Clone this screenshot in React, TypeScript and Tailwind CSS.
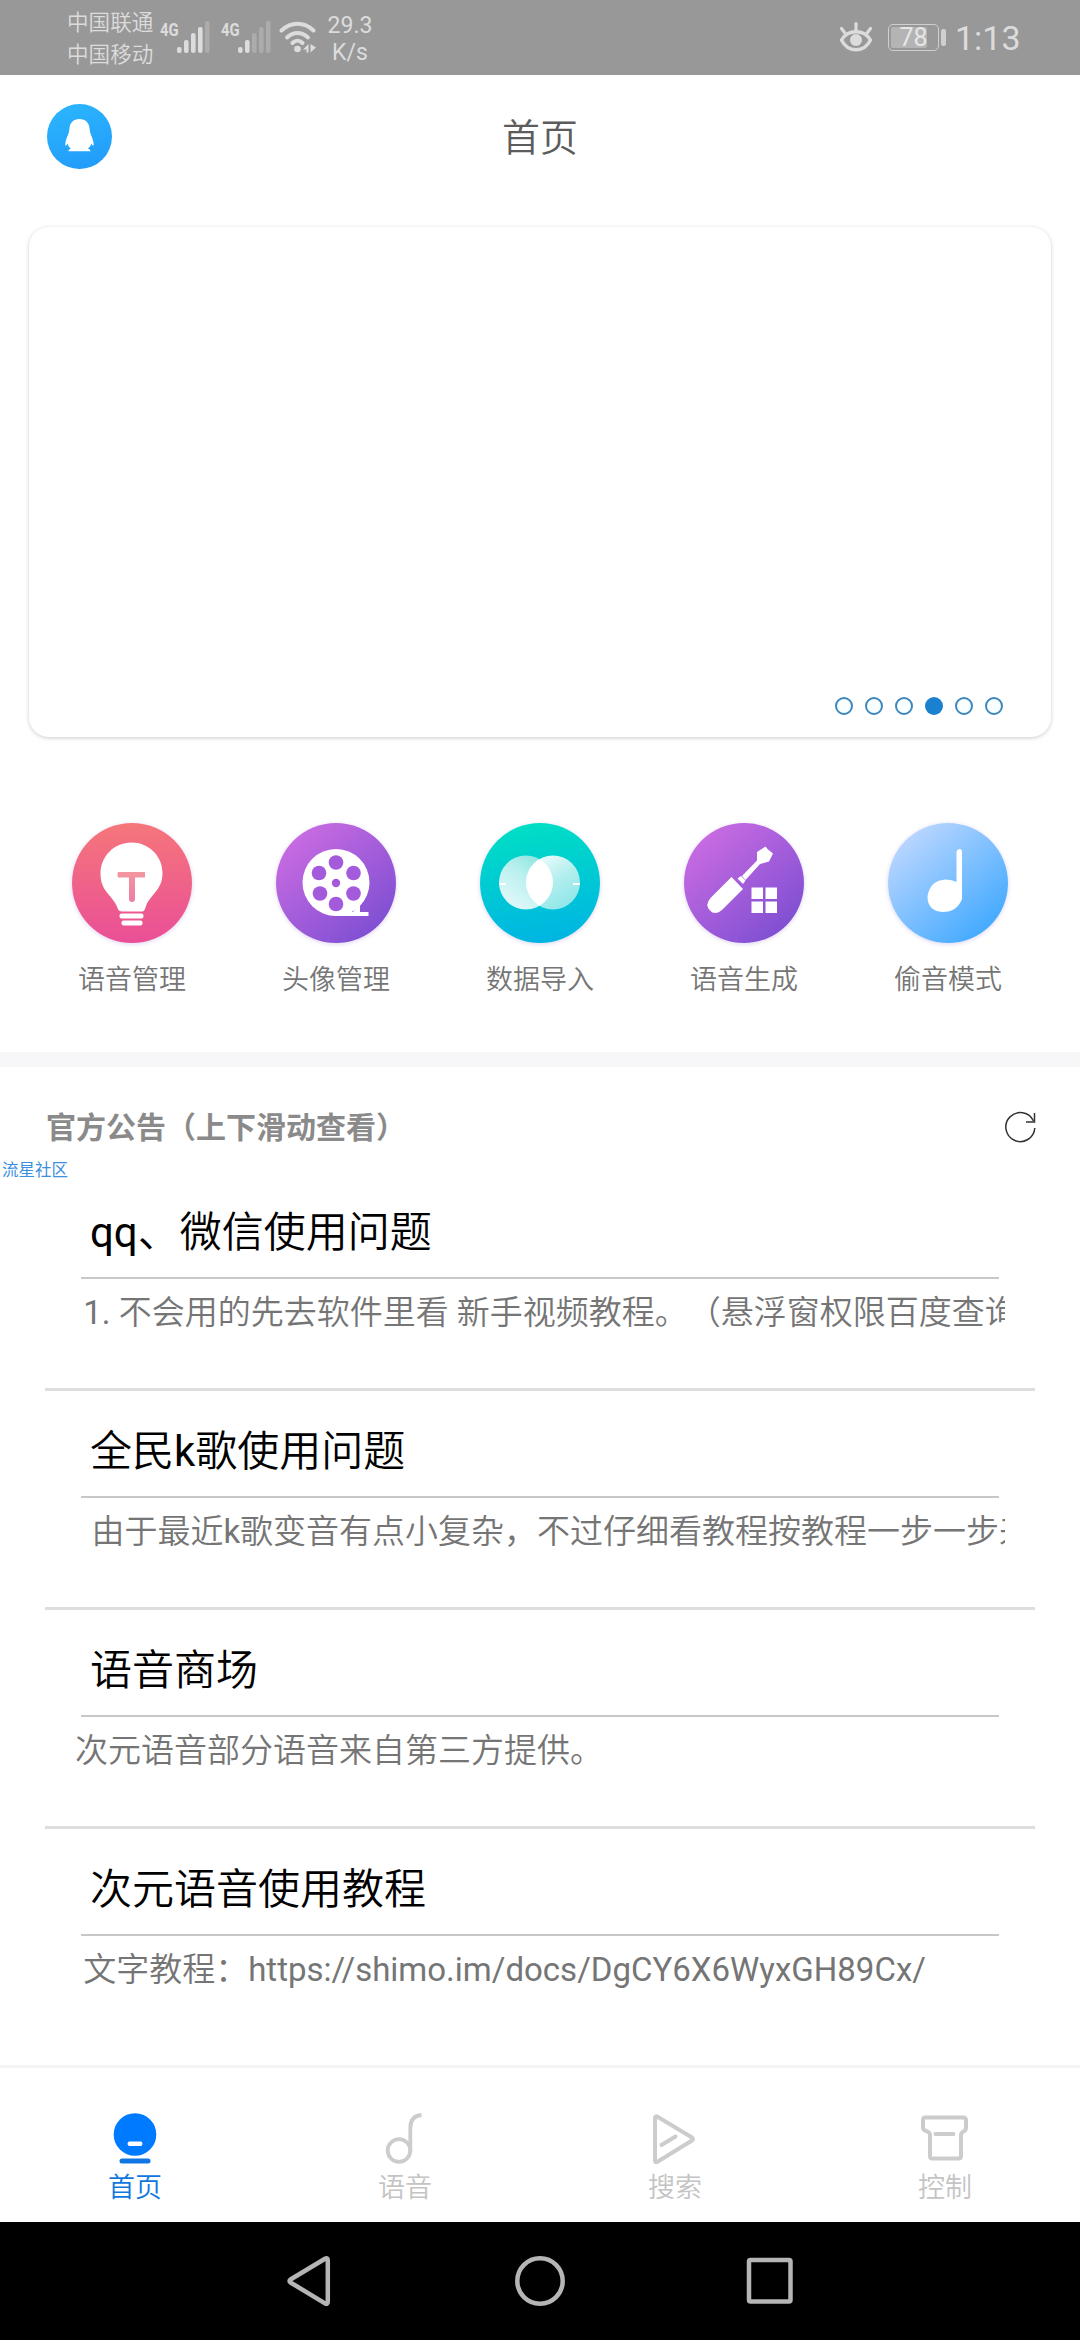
import type { ReactNode } from "react";

const shortcuts = [
  { label: "语音管理", icon: <BulbIcon /> },
  { label: "头像管理", icon: <ReelIcon /> },
  { label: "数据导入", icon: <OverlapIcon /> },
  { label: "语音生成", icon: <ToolIcon /> },
  { label: "偷音模式", icon: <NoteIcon /> },
];

// leading spaces are part of the notice text
const notices = [
  {
    title: "qq、微信使用问题",
    text: " 1. 不会用的先去软件里看 新手视频教程。（悬浮窗权限百度查询",
  },
  {
    title: "全民k歌使用问题",
    text: "  由于最近k歌变音有点小复杂，不过仔细看教程按教程一步一步来",
  },
  { title: "语音商场", text: "次元语音部分语音来自第三方提供。" },
  {
    title: "次元语音使用教程",
    text: " 文字教程：https://shimo.im/docs/DgCY6X6WyxGH89Cx/",
  },
];

const tabs = [
  { label: "首页", icon: <HomeTabIcon />, active: true },
  { label: "语音", icon: <VoiceTabIcon />, active: false },
  { label: "搜索", icon: <SearchTabIcon />, active: false },
  { label: "控制", icon: <ControlTabIcon />, active: false },
];

// latin runs keep the regular weight inside the thinner chinese text
function MixedText({ text }: { text: string }) {
  return (
    <>
      {text.split(/([\x20-\x7e]+)/).map((part, i) =>
        i % 2 ? (
          <span key={i} className="font-normal">
            {part}
          </span>
        ) : (
          part
        ),
      )}
    </>
  );
}

function Signal({ level }: { level: number }) {
  return (
    <div className="flex h-[30px] w-[50px] items-start">
      <span className="w-[17px] origin-left scale-x-[.78] font-['Roboto'] text-[19px] leading-[17px] font-bold">
        4G
      </span>
      <svg width="33" height="32" viewBox="0 0 33 32" fill="#dcdcdc">
        <rect x="0" y="26" width="4.6" height="6" rx="2" />
        <rect x="7" y="19" width="4.6" height="13" rx="2" />
        <rect x="14" y="12" width="4.6" height="20" rx="2" opacity={level > 2 ? 1 : 0.3} />
        <rect x="21" y="6" width="4.6" height="26" rx="2" opacity={level > 3 ? 1 : 0.3} />
        <rect x="28" y="0" width="4.6" height="32" rx="2" opacity="0.3" />
      </svg>
    </div>
  );
}

function StatusBar() {
  return (
    <div className="flex h-[75px] items-start bg-[#989898] pl-[67px] text-[#dcdcdc]">
      <div className="w-[93px] pt-[7px] text-[21.6px] leading-[32px] font-[350] whitespace-nowrap">
        <p>中国联通</p>
        <p>中国移动</p>
      </div>
      <div className="flex gap-[11px] pt-[21px]">
        <Signal level={4} />
        <Signal level={2} />
      </div>
      <svg className="mt-[21px] ml-[8px]" width="38" height="32" viewBox="0 0 38 32" fill="none">
        <g stroke="#dcdcdc" strokeWidth="4" strokeLinecap="round">
          <path d="M2.5 9.5C12 .5 25 .5 34.500 9.500" />
          <path d="M8 16.500C14.500 10.500 22.500 10.500 29 16.500" />
          <path d="M13.500 22C16.500 19 20.500 19 23.500 22" />
        </g>
        <circle cx="18.500" cy="28" r="3.300" fill="#dcdcdc" />
        <path d="M24 28.500L29.500 23V31.500H27.500V28.500ZM31.500 23V31.500L37 26.500Z" fill="#dcdcdc" />
      </svg>
      <div className="ml-[9px] w-[48px] pt-[12px] text-center text-[23px] leading-[27px]">
        <p>29.3</p>
        <p>K/s</p>
      </div>
      <svg className="mt-[21px] ml-[465px]" width="34" height="32" viewBox="0 0 34 32" fill="none">
        <path
          d="M2.500 19C9 8 25 8 31.500 19C25 32 9 32 2.500 19Z"
          stroke="#dcdcdc"
          strokeWidth="3.400"
          strokeLinejoin="round"
        />
        <circle cx="17" cy="19" r="6" fill="#dcdcdc" />
        <path d="M17 2.500V9M2.500 7.500L5.500 11.500M31.500 7.500L28.500 11.500" stroke="#dcdcdc" strokeWidth="3.200" strokeLinecap="round" />
      </svg>
      <div className="mt-[24px] ml-[15px] flex items-center gap-[2px]">
        <div className="flex h-[27px] w-[51px] rounded-[5px] border-[1.500px] border-[#cfcfcf] p-[2px]">
          <div className="flex h-full w-[36px] items-center justify-center rounded-[2px] bg-[#b4b4b4] pl-[9px] text-[25px] whitespace-nowrap text-[#e6e6e6]">
            78
          </div>
        </div>
        <div className="h-[17px] w-[5px] rounded-[2px] bg-[#cfcfcf]" />
      </div>
      <p className="mt-[19px] ml-[9px] text-[34px] leading-[38px]">1:13</p>
    </div>
  );
}

function BulbIcon() {
  return (
    <svg width="120" height="120" viewBox="0 0 120 120">
      <defs>
        <linearGradient id="bulb" x1="0" y1="0" x2="0" y2="1">
          <stop offset="0" stopColor="#f5767a" />
          <stop offset="1" stopColor="#ea4f97" />
        </linearGradient>
        <linearGradient id="bulbT" x1="0" y1="0" x2="0" y2="1">
          <stop offset="0" stopColor="#f3969f" />
          <stop offset="1" stopColor="#ee7ba6" />
        </linearGradient>
      </defs>
      <circle cx="60" cy="60" r="60" fill="url(#bulb)" />
      <path
        d="M59.500 19.500C42 19.500 28.500 33.500 28.500 50.500C28.500 67 38 70.500 44 81.500C46 85.500 46 88.500 50 88.500H70C73 88.500 73 85.500 74.500 81.500C80 70.500 90.500 66 90.500 50C90.500 33 77 19.500 59.500 19.500Z"
        fill="#fff"
      />
      <rect x="47.500" y="90.500" width="24" height="5" rx="2" fill="#fff" />
      <rect x="49.500" y="97.500" width="21" height="5" rx="2" fill="#fff" />
      <path d="M46 49H73V54.500H63V76Q63 79 60 79Q57 79 57 76V54.500H46Q45 51.500 46 49Z" fill="url(#bulbT)" />
    </svg>
  );
}

function PurpleDisc({ id, children }: { id: string; children: ReactNode }) {
  return (
    <svg width="120" height="120" viewBox="0 0 120 120">
      <defs>
        <linearGradient id={id} x1="0.150" y1="0.150" x2="0.800" y2="0.900">
          <stop offset="0" stopColor="#c66ae1" />
          <stop offset="1" stopColor="#8150d3" />
        </linearGradient>
      </defs>
      <circle cx="60" cy="60" r="60" fill={`url(#${id})`} />
      {children}
    </svg>
  );
}

function ReelIcon() {
  return (
    <PurpleDisc id="reel">
      <circle cx="60" cy="59.500" r="33.500" fill="#fff" />
      <path d="M60 89H92.500V93H58Z" fill="#fff" />
      <path d="M77 89L84 81V89Z" fill="#fff" />
      <g fill="#a45bdb">
        <circle cx="60" cy="39.500" r="7.300" />
        <circle cx="43" cy="50" r="7.300" />
        <circle cx="77.500" cy="50" r="7.300" />
        <circle cx="60" cy="60" r="4.200" />
        <circle cx="44" cy="70.500" r="7.300" />
        <circle cx="77.500" cy="70.500" r="7.300" />
        <circle cx="60" cy="81" r="7.300" />
      </g>
    </PurpleDisc>
  );
}

function OverlapIcon() {
  return (
    <svg width="120" height="120" viewBox="0 0 120 120">
      <defs>
        <linearGradient id="teal" x1="0.300" y1="0" x2="0.450" y2="1">
          <stop offset="0" stopColor="#00dfc4" />
          <stop offset="1" stopColor="#00b5e2" />
        </linearGradient>
        <linearGradient id="left" x1="0.900" y1="0" x2="0.300" y2="0.900">
          <stop offset="0" stopColor="#7fe2da" />
          <stop offset="0.500" stopColor="#b9f0ee" />
          <stop offset="1" stopColor="#dcf7f8" />
        </linearGradient>
        <linearGradient id="right" x1="0.200" y1="0" x2="0.800" y2="1">
          <stop offset="0" stopColor="#f2fdfd" />
          <stop offset="0.500" stopColor="#b2eeee" />
          <stop offset="1" stopColor="#8ce6e8" />
        </linearGradient>
        <clipPath id="leftClip">
          <circle cx="46" cy="59.500" r="27" />
        </clipPath>
      </defs>
      <circle cx="60" cy="60" r="60" fill="url(#teal)" />
      <circle cx="46" cy="59.500" r="27" fill="url(#left)" />
      <circle cx="73" cy="59.500" r="27" fill="url(#right)" />
      <circle cx="73" cy="59.500" r="27" fill="#fff" clipPath="url(#leftClip)" />
      <path d="M19 61H26M93 61H100" stroke="#fff" strokeWidth="2" />
    </svg>
  );
}

function ToolIcon() {
  return (
    <PurpleDisc id="tool">
      <g fill="#fff">
        <path d="M47.500 54L59 66L38.500 86.500Q31 93 26 87.500Q20.500 82 26.500 75Z" />
        <path d="M53.500 55.500L57 53L61.500 57.500L59 61Z" />
        <path d="M58 53L73 37.500V29L81.500 23.500L84 26.500L89 30.500L85 38.500L76 41L61.500 57Z" />
        <rect x="67.500" y="64.500" width="11.500" height="11.500" />
        <rect x="81.500" y="64.500" width="11.500" height="11.500" />
        <rect x="67.500" y="78.500" width="11.500" height="11.500" />
        <rect x="81.500" y="78.500" width="11.500" height="11.500" />
      </g>
    </PurpleDisc>
  );
}

function NoteIcon() {
  return (
    <svg width="120" height="120" viewBox="0 0 120 120">
      <defs>
        <linearGradient id="note" x1="0.100" y1="0.150" x2="0.750" y2="0.900">
          <stop offset="0" stopColor="#bad6ff" />
          <stop offset="1" stopColor="#49acff" />
        </linearGradient>
      </defs>
      <circle cx="60" cy="60" r="60" fill="url(#note)" />
      <path
        d="M68.500 28.500Q69 26 71.500 26Q74 26 74 28.500V76Q69 89 54.500 89Q39.500 88 39.500 73.500Q42 57 58 56.500Q64 56.500 68.500 59Z"
        fill="#fff"
      />
    </svg>
  );
}

function HomeTabIcon() {
  return (
    <svg width="52" height="52" viewBox="0 0 52 52">
      <circle cx="26" cy="21.500" r="21.300" fill="#007aff" />
      <rect x="18.500" y="28.500" width="15" height="4.400" rx="2.200" fill="#fff" />
      <rect x="10.500" y="45.500" width="31" height="5" rx="2.500" fill="#0f76e2" />
    </svg>
  );
}

function VoiceTabIcon() {
  return (
    <svg width="52" height="52" viewBox="0 0 52 52" fill="none" stroke="#ccc" strokeWidth="3.800">
      <circle cx="20" cy="37.500" r="11.300" />
      <path d="M31.300 38V15C31.300 7 35 2.500 42.500 2" />
    </svg>
  );
}

function SearchTabIcon() {
  return (
    <svg width="52" height="52" viewBox="0 0 52 52" fill="none" stroke="#ccc" strokeWidth="4" strokeLinecap="round" strokeLinejoin="round">
      <path d="M6 5Q6 2.500 8.500 3.800L43 24.500Q45 26 43 27.500L8.500 48.700Q6 50 6 47.500Z" />
      <path d="M12.500 32L26.500 23.500" />
    </svg>
  );
}

function ControlTabIcon() {
  return (
    <svg width="52" height="52" viewBox="0 0 52 52" fill="none" stroke="#ccc" strokeWidth="4" strokeLinecap="round" strokeLinejoin="round">
      <path d="M6 4.500H44Q47 4.500 47 7.500V14.500Q47 17.500 44.500 18.500Q42 19.500 42 22.500V43Q42 45.500 39.500 45.500H13.500Q11 45.500 11 43V22.500Q11 19.500 8.500 18.500Q4 17.500 4 14.500V7.500Q4 4.500 6 4.500Z" />
      <path d="M16.500 21H34.500" />
    </svg>
  );
}

function NavigationBar() {
  return (
    <div className="flex h-[118px] items-center justify-center gap-[178px] bg-black">
      <svg width="52" height="52" viewBox="0 0 52 52" fill="none" stroke="#b5b5b5" strokeWidth="4.500" strokeLinejoin="round">
        <path d="M43.800 5.500V46.500Q43.800 50 41 48.300L6.500 27.500Q4.500 26 6.500 24.500L41 3.700Q43.800 2 43.800 5.500Z" />
      </svg>
      <svg width="52" height="52" viewBox="0 0 52 52" fill="none" stroke="#b5b5b5" strokeWidth="4.500">
        <circle cx="26" cy="26" r="22.700" />
      </svg>
      <svg width="52" height="52" viewBox="0 0 52 52" fill="none" stroke="#b5b5b5" strokeWidth="4.500">
        <rect x="5" y="5" width="41.500" height="41.500" rx="1.500" />
      </svg>
    </div>
  );
}

const App = () => {
  return (
    <div className="flex h-[2340px] w-[1080px] flex-col overflow-hidden bg-white font-['Roboto','Noto_Sans_CJK_SC',sans-serif] [text-spacing-trim:space-all]">
      <StatusBar />

      {/* Header */}
      <header className="grid h-[152px] grid-cols-3 items-start px-[47px] pt-[29px]">
        <svg width="65" height="65" viewBox="0 0 65 65">
          <defs>
            <linearGradient id="avatar" x1="0.300" y1="0" x2="0.600" y2="1">
              <stop offset="0" stopColor="#2bb5fd" />
              <stop offset="1" stopColor="#229cfb" />
            </linearGradient>
          </defs>
          <circle cx="32.500" cy="32.500" r="32.500" fill="url(#avatar)" />
          <path
            d="M32.500 15C26.500 15 22.500 19 22.300 25.500C22 31 18.300 34 18.300 41C18.300 43 20 40.500 20.700 39.500C21 42.500 22.500 43.500 24 44.500C21.500 45.500 21 47 21.500 47.300H43.500C43.700 46.500 43 45.500 41 44.500C43 43 43.800 41.500 44.300 39.500C45 41 46.600 42.500 46.700 41C46.500 34 43 31 42.700 25.500C42.300 19 38.500 15 32.500 15Z"
            fill="#fff"
          />
        </svg>
        <h1 className="pt-[10px] text-center text-[38px] leading-[48px] font-[350] text-[#5c5c5c]">
          首页
        </h1>
      </header>

      {/* Banner */}
      <div className="mx-[29px] flex h-[510px] items-end justify-end gap-[12px] rounded-[20px] bg-white pr-[48px] pb-[22px] shadow-[0_1px_4px_rgba(0,0,0,0.2)]">
        {[0, 1, 2, 3, 4, 5].map((i) => (
          <span
            key={i}
            className={
              i === 3
                ? "size-[18px] rounded-full bg-[#1a80d0]"
                : "size-[18px] rounded-full border-2 border-[#3d87bd] bg-[#f9ffff]"
            }
          />
        ))}
      </div>

      {/* Shortcuts */}
      <div className="mx-[30px] grid h-[315px] grid-cols-5 pt-[86px]">
        {shortcuts.map((item) => (
          <div key={item.label} className="flex flex-col items-center">
            <div className="size-[120px] rounded-full shadow-[0_1px_4px_rgba(120,80,200,0.25)]">
              {item.icon}
            </div>
            <p className="mt-[19px] text-[27px] leading-[36px] font-[350] text-[#757575]">
              {item.label}
            </p>
          </div>
        ))}
      </div>

      <div className="h-[15px] bg-[#f7f7f9]" />

      {/* Notices */}
      <div className="flex h-[91px] items-start justify-between pt-[41px] pr-[44px] pl-[46px]">
        <h2 className="text-[30px] leading-[40px] font-bold text-[#8a8a8a]">
          官方公告（上下滑动查看）
        </h2>
        <svg className="mt-[3px]" width="31" height="32" viewBox="0 0 31 32" fill="none" stroke="#333" strokeWidth="1.500">
          <path d="M29.800 17A14.500 14.500 0 1 1 28.500 10" />
          <path d="M29.500 2V11H21" />
        </svg>
      </div>
      <p className="pl-[2px] text-[16.500px] leading-[26px] text-[#3d8fe0]">流星社区</p>

      <div className="-mt-[12px] flex flex-col">
        {notices.map((notice, i) => (
          <div
            key={notice.title}
            className={
              i === notices.length - 1
                ? "mx-[45px] h-[219px]"
                : "mx-[45px] h-[219px] border-b-[3px] border-[#dedede]"
            }
          >
            <h3 className="mx-[36px] h-[107px] border-b-2 border-[#c8c8c8] pt-[31px] pl-[9px] text-[42px] leading-[60px] font-[350] text-black">
              <MixedText text={notice.title} />
            </h3>
            <p className="mx-[30px] overflow-hidden pt-[11px] text-[33px] leading-[46px] font-[350] whitespace-pre text-[#757575]">
              <MixedText text={notice.text} />
            </p>
          </div>
        ))}
      </div>

      {/* Tabs */}
      <div className="mt-auto grid h-[157px] grid-cols-4 border-t-[3px] border-[#f5f5f5] pt-[45px]">
        {tabs.map((tab) => (
          <div key={tab.label} className="flex flex-col items-center">
            {tab.icon}
            <p
              className={
                tab.active
                  ? "mt-[5px] text-[27px] leading-[36px] font-[350] text-[#0f78dd]"
                  : "mt-[5px] text-[27px] leading-[36px] font-[350] text-[#c4c4c4]"
              }
            >
              {tab.label}
            </p>
          </div>
        ))}
      </div>

      <NavigationBar />
    </div>
  );
};

export default App;
